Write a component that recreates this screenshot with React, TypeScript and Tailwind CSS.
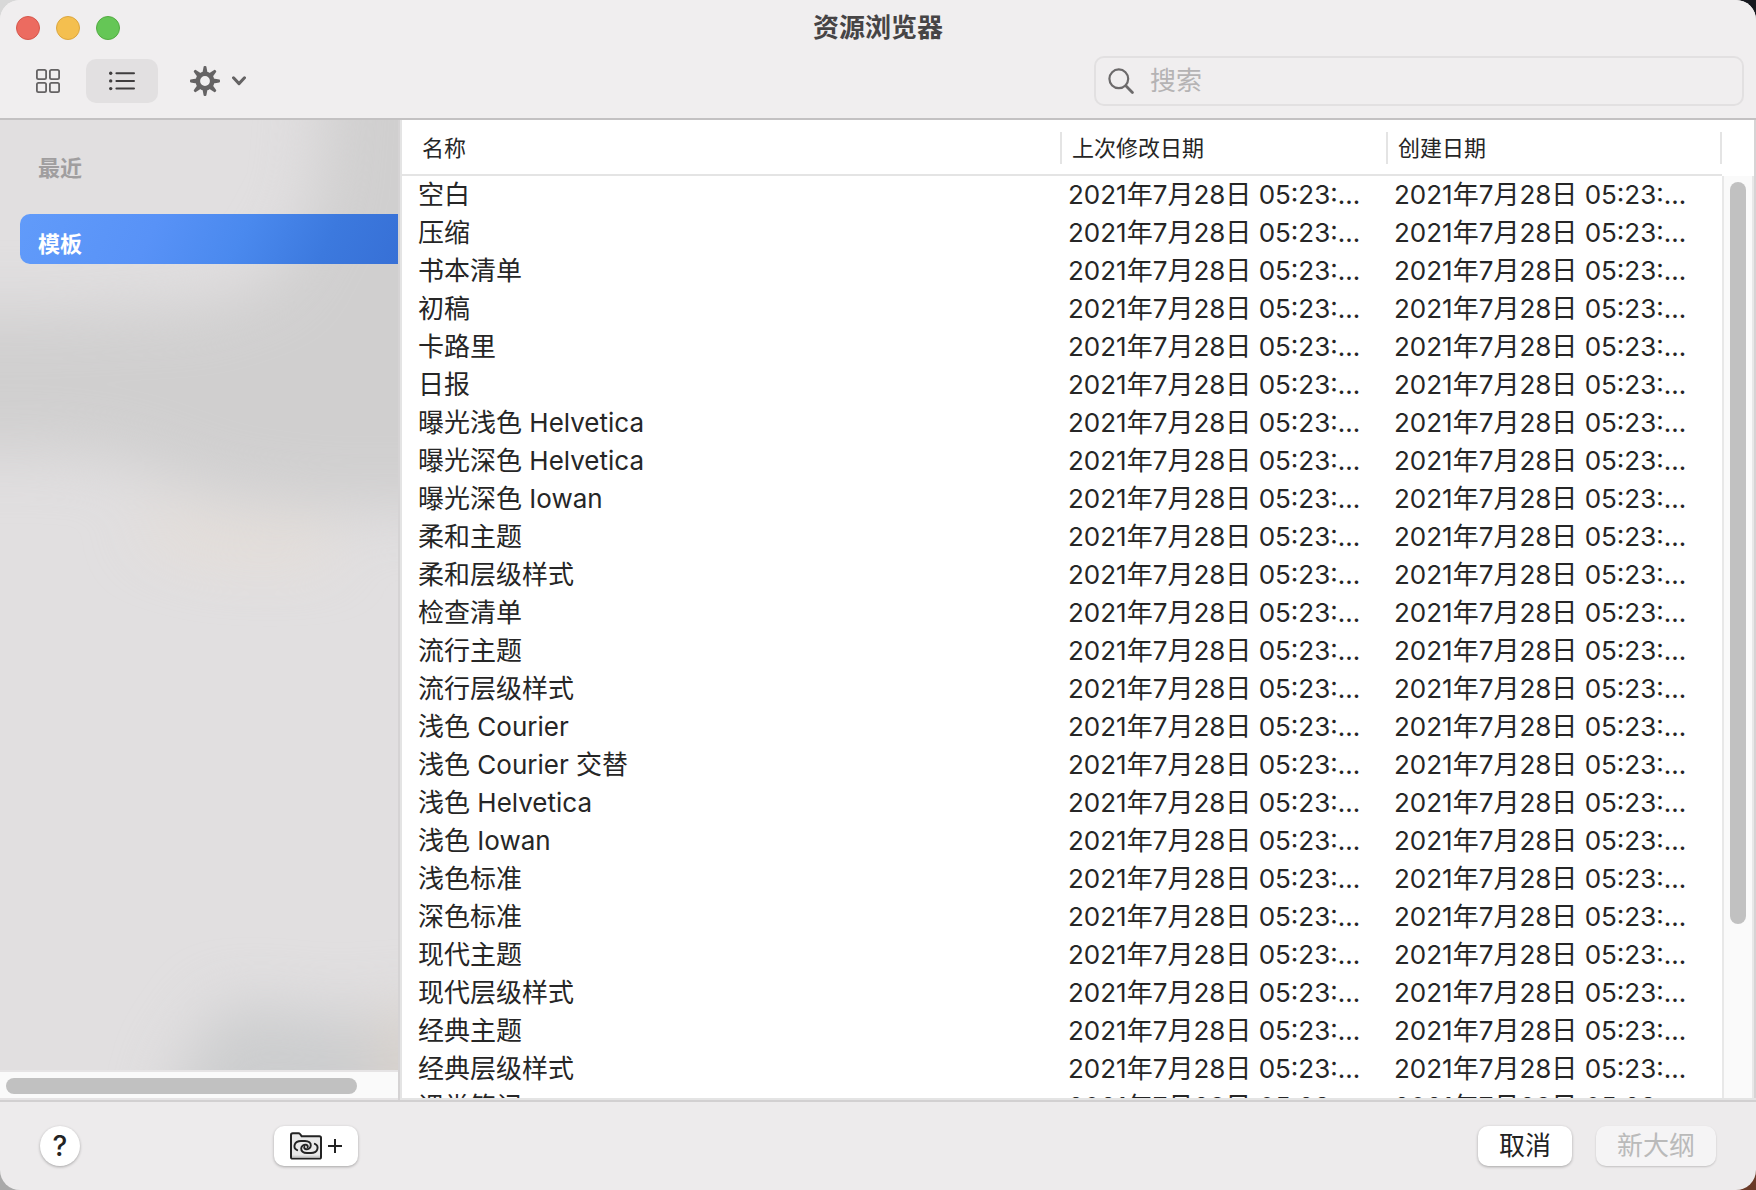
import { useState } from 'react';

const MODIFIED = '2021年7月28日 05:23:…';

const templates = [
  '空白',
  '压缩',
  '书本清单',
  '初稿',
  '卡路里',
  '日报',
  '曝光浅色 Helvetica',
  '曝光深色 Helvetica',
  '曝光深色 Iowan',
  '柔和主题',
  '柔和层级样式',
  '检查清单',
  '流行主题',
  '流行层级样式',
  '浅色 Courier',
  '浅色 Courier 交替',
  '浅色 Helvetica',
  '浅色 Iowan',
  '浅色标准',
  '深色标准',
  '现代主题',
  '现代层级样式',
  '经典主题',
  '经典层级样式',
  '课堂笔记',
];

function GridIcon() {
  return (
    <svg className="h-6 w-6" viewBox="0 0 24 24" fill="none" stroke="#656364" strokeWidth="1.8" aria-hidden="true">
      <rect x="0.9" y="0.9" width="9.2" height="9.2" rx="1.6" />
      <rect x="13.9" y="0.9" width="9.2" height="9.2" rx="1.6" />
      <rect x="0.9" y="13.9" width="9.2" height="9.2" rx="1.6" />
      <rect x="13.9" y="13.9" width="9.2" height="9.2" rx="1.6" />
    </svg>
  );
}

function ListIcon() {
  return (
    <svg className="h-5 w-[26px]" viewBox="0 0 26 20" aria-hidden="true">
      <g fill="#3f3d3e">
        <circle cx="1.7" cy="2.2" r="1.7" />
        <circle cx="1.7" cy="9.9" r="1.7" />
        <circle cx="1.7" cy="17.6" r="1.7" />
      </g>
      <path d="M7.4 2.2H25M7.4 9.9H25M7.4 17.6H25" stroke="#3f3d3e" strokeWidth="2" strokeLinecap="round" />
    </svg>
  );
}

function GearIcon() {
  const teeth = [0, 45, 90, 135, 180, 225, 270, 315];
  return (
    <svg className="h-[30px] w-[30px]" viewBox="-15 -15 30 30" aria-hidden="true">
      <circle r="7.2" fill="none" stroke="#656364" strokeWidth="4.6" />
      {teeth.map((angle) => (
        <path
          key={angle}
          d="M-2.5 -8.4L-1.4 -14.3Q-1.2 -15 -0.5 -15H0.5Q1.2 -15 1.4 -14.3L2.5 -8.4Z"
          fill="#656364"
          transform={`rotate(${angle})`}
        />
      ))}
    </svg>
  );
}

function LinkedFolderIcon() {
  const link =
    'M7.2 18.2C4.6 17 4 14.6 4.8 12.4C5.8 9.8 8.6 9 11 9H15C18.8 9 21 11 20.8 13.6C20.6 16.2 18.2 17.4 16 17.2C14.4 17 13.9 15.8 14.4 14.8';
  return (
    <svg className="h-7 w-8" viewBox="0 0 32 28" fill="none" stroke="#232323" aria-hidden="true">
      <path
        d="M1 3Q1 1.2 2.8 1.2H8.4Q9.4 1.2 10 2L11.6 4.2H29.4Q31 4.2 31 5.8V25Q31 26.6 29.4 26.6H2.6Q1 26.6 1 25Z"
        fill="#e9e9e9"
        strokeWidth="2"
      />
      <path d="M2 23.6H30V25.6H2Z" fill="#cfcfcf" stroke="none" />
      <path d={link} strokeWidth="1.9" strokeLinecap="round" />
      <path d={link} strokeWidth="1.9" strokeLinecap="round" transform="rotate(180 16 15)" />
    </svg>
  );
}

// soft shapes of the desktop showing through the sidebar
function Vibrancy() {
  return (
    <svg
      className="absolute inset-0 h-full w-full"
      viewBox="0 0 398 950"
      preserveAspectRatio="none"
      aria-hidden="true"
    >
      <defs>
        <filter id="soft" x="-30%" y="-30%" width="160%" height="160%" colorInterpolationFilters="sRGB">
          <feGaussianBlur stdDeviation="30" />
        </filter>
      </defs>
      <g filter="url(#soft)">
        <path
          d="M334 -150H520V388H320L220 375L120 340L60 332H-120V192H60L200 186L275 160L318 80Z"
          fill="#d0cfcf"
        />
        <path d="M140 395L230 415H330V435H220L150 415Z" fill="#e8dccf" />
        <path d="M160 1080L180 950L225 885L500 910V1080Z" fill="#cccdce" />
        <path d="M370 890H520V1080H390Z" fill="#d8d2cd" />
      </g>
    </svg>
  );
}

function Sidebar() {
  return (
    <aside className="flex w-[400px] shrink-0 flex-col border-r-2 border-[#d5d3d4] bg-[#e1dfe0]">
      <nav className="relative flex-1 overflow-hidden">
        <Vibrancy />
        <div className="relative pl-5 pt-8">
          <h2 className="pl-[18px] text-[22px] leading-8 font-bold text-[#a09e9f]">最近</h2>
          <a
            href="#templates"
            aria-current="page"
            className="mt-[30px] block h-[50px] rounded-l-[10px] bg-[linear-gradient(115deg,#619bfa_0%,#5892f7_35%,#4a89ee_58%,#3c79de_80%,#3770d6_100%)] pt-3 pl-[18px] text-[22px] leading-9 font-bold text-white"
          >
            模板
          </a>
        </div>
      </nav>
      <div className="h-[30px] border-t-2 border-b-2 border-[#e6e4e5] bg-[#fafafa] px-1.5 pt-1.5">
        <div className="h-4 w-[91%] rounded-full bg-[#c1c1c1]" />
      </div>
    </aside>
  );
}

function TemplateTable() {
  return (
    <div className="flex min-w-0 flex-1 border-l-2 border-b-2 border-[#e4e4e4] bg-white">
      <div className="min-w-0 flex-1 overflow-hidden">
        <table className="w-full table-fixed border-separate border-spacing-0 text-[26px] text-[#262626]">
          <colgroup>
            <col />
            <col className="w-[326px]" />
            <col className="w-[334px]" />
          </colgroup>
          <thead>
            <tr className="text-left text-[22px] leading-8">
              <th scope="col" className="h-14 border-b-2 border-[#e4e4e4] p-0 pt-0.5 font-normal">
                <div className="border-r-2 border-[#e4e4e4] pl-5">名称</div>
              </th>
              <th scope="col" className="h-14 border-b-2 border-[#e4e4e4] p-0 pt-0.5 font-normal">
                <div className="border-r-2 border-[#e4e4e4] pl-[10px]">上次修改日期</div>
              </th>
              <th scope="col" className="h-14 border-b-2 border-[#e4e4e4] p-0 pt-0.5 font-normal">
                <div className="border-r-2 border-[#e4e4e4] pl-[10px]">创建日期</div>
              </th>
            </tr>
          </thead>
          <tbody>
            {templates.map((name) => (
              <tr key={name} className="leading-[38px] whitespace-nowrap">
                <td className="h-[38px] p-0 pl-4">{name}</td>
                <td className="h-[38px] p-0 pl-1.5">{MODIFIED}</td>
                <td className="h-[38px] p-0 pl-1.5">{MODIFIED}</td>
              </tr>
            ))}
          </tbody>
        </table>
      </div>
      <div className="flex w-[34px] shrink-0 flex-col border-r-2 border-[#d6d4d5] pt-14">
        <div className="flex-1 border-x-2 border-[#e8e8e8] bg-[#fafafa] px-1.5 pt-1.5">
          <div className="h-[81%] w-4 rounded-full bg-[#c1c1c1]" />
        </div>
      </div>
    </div>
  );
}

export default function App() {
  const [query, setQuery] = useState('');

  return (
    <div className="h-screen bg-[conic-gradient(#17191f_0_25%,#6b3a28_25%_50%,#a9a9a9_50%_75%,#d8d8d8_75%)] font-['Inter','Noto_Sans_CJK_SC',sans-serif]">
      <div className="flex h-full flex-col overflow-hidden rounded-[20px] bg-[#edebec]">
        <header className="border-b-2 border-[#c3c1c2] bg-[#f0eeef] pb-3">
          <div className="grid h-14 grid-cols-[1fr_auto_1fr] items-center px-4">
            <div className="flex gap-4">
              <button type="button" aria-label="关闭" className="h-6 w-6 rounded-full border border-[#d5574c] bg-[#ec6b60]" />
              <button type="button" aria-label="最小化" className="h-6 w-6 rounded-full border border-[#dba63f] bg-[#f4bf4f]" />
              <button type="button" aria-label="缩放" className="h-6 w-6 rounded-full border border-[#53ab42] bg-[#65c656]" />
            </div>
            <h1 className="text-[26px] leading-8 font-bold text-[#464445]">资源浏览器</h1>
          </div>

          <div className="flex h-[50px] items-center justify-between pr-3 pl-5">
            <div className="flex shrink-0 items-center">
              <button type="button" aria-label="图标视图" className="flex h-11 w-14 items-center justify-center">
                <GridIcon />
              </button>
              <button
                type="button"
                aria-label="列表视图"
                aria-pressed="true"
                className="ml-[10px] flex h-11 w-[72px] items-center justify-center rounded-[10px] bg-[#e2e0e1]"
              >
                <ListIcon />
              </button>
              <button type="button" aria-label="操作" className="ml-8 flex items-center gap-3">
                <GearIcon />
                <svg className="h-[10px] w-[14px]" viewBox="0 0 14 10" fill="none" aria-hidden="true">
                  <path d="M1.5 1.8L7 7.6L12.5 1.8" stroke="#656364" strokeWidth="3" strokeLinecap="round" strokeLinejoin="round" />
                </svg>
              </button>
            </div>
            <label className="flex h-[50px] max-w-[650px] flex-1 items-center gap-4 rounded-[10px] border-2 border-[#e2e0e1] pl-3">
              <svg className="h-[26px] w-[26px] shrink-0" viewBox="0 0 26 26" fill="none" stroke="#6c6a6b" strokeLinecap="round" aria-hidden="true">
                <circle cx="10.8" cy="10.8" r="9.4" strokeWidth="2.2" />
                <path d="M17.8 17.8L24.4 24.4" strokeWidth="2.8" />
              </svg>
              <input
                type="text"
                aria-label="搜索"
                placeholder="搜索"
                value={query}
                onChange={(e) => setQuery(e.target.value)}
                className="min-w-0 flex-1 bg-transparent text-[26px] leading-8 text-[#262626] outline-none placeholder:text-[#b5b3b4]"
              />
            </label>
          </div>
        </header>

        <main className="flex min-h-0 flex-1">
          <Sidebar />
          <TemplateTable />
        </main>

        <footer className="flex items-start border-t-2 border-[#d2d0d1] px-10 pt-6 pb-6 text-[26px] leading-8">
          <button
            type="button"
            aria-label="帮助"
            className="h-10 w-10 rounded-full bg-white text-[28px] leading-10 font-medium text-[#232323] shadow-[0_1px_3px_rgba(0,0,0,0.3)]"
          >
            ?
          </button>
          <button
            type="button"
            aria-label="添加链接文件夹"
            className="ml-[194px] flex h-10 w-[84px] items-center justify-center gap-1.5 rounded-[10px] bg-white shadow-[0_1px_3px_rgba(0,0,0,0.3)]"
          >
            <LinkedFolderIcon />
            <svg className="h-[14px] w-[14px]" viewBox="0 0 14 14" stroke="#232323" strokeWidth="2" aria-hidden="true">
              <path d="M7 0V14M0 7H14" />
            </svg>
          </button>
          <button
            type="button"
            className="ml-auto h-10 w-[94px] rounded-[10px] bg-white text-[#232323] shadow-[0_1px_3px_rgba(0,0,0,0.3)]"
          >
            取消
          </button>
          <button
            type="button"
            disabled
            className="ml-6 h-10 w-[120px] rounded-[10px] bg-[#f5f4f5] text-[#bababa] shadow-[0_1px_2px_rgba(0,0,0,0.18)]"
          >
            新大纲
          </button>
        </footer>
      </div>
    </div>
  );
}
